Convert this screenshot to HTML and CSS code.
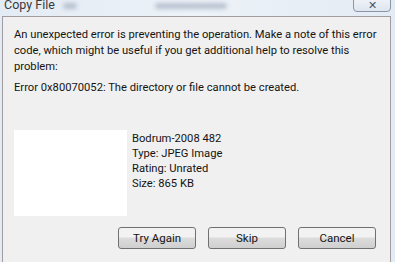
FILE: index.html
```html
<!DOCTYPE html>
<html lang="en">
<head>
  <meta charset="UTF-8" />
  <title>Copy File</title>
  <link rel="stylesheet" href="styles.css">
</head>
<body>

  <div class="window">
    <div class="titlebar">
      <span class="title">Copy File</span>
      <span class="smudge smudge-a"></span>
      <span class="smudge smudge-b"></span>
      <button class="close-btn">&#x2715;</button>
    </div>

    <div class="client">
      <p class="message">An unexpected error is preventing the operation. Make a note of this error code, which might be useful if you get additional help to resolve this problem:</p>
      <p class="error-code">Error 0x80070052: The directory or file cannot be created.</p>

      <div class="file-info">
        <div class="thumb"></div>
        <div class="details">
          <div>Bodrum-2008 482</div>
          <div>Type: JPEG Image</div>
          <div>Rating: Unrated</div>
          <div>Size: 865 KB</div>
        </div>
      </div>

      <div class="actions">
        <button class="btn">Try Again</button>
        <button class="btn">Skip</button>
        <button class="btn">Cancel</button>
      </div>
    </div>
  </div>

</body>
</html>
```

FILE: styles.css
```css
body {
  margin: 0;
  font-family: Roboto, 'Open Sans', sans-serif;
  font-size: 11.2px;
  color: #141414;
  background: #e6edf5;
}

.window {
  width: 395px;
  height: 262px;
  display: flex;
  flex-direction: column;
  background: linear-gradient(to right, #e3ebf4, #edf2f8 50%, #e3ebf4);
  overflow: hidden;
}

.titlebar {
  height: 16px;
  display: flex;
  align-items: flex-start;
}

.title {
  margin-top: -2px;
  padding-left: 4px;
  font-size: 12.5px;
  line-height: 14px;
  color: #3a3a3a;
}

.smudge {
  height: 6px;
  margin-top: 3px;
  background: #8f9cb0;
  filter: blur(2px);
  opacity: 0.55;
  border-radius: 3px;
}

.smudge-a {
  width: 14px;
  margin-left: 8px;
}

.smudge-b {
  width: 72px;
  margin-left: 78px;
}

.close-btn {
  margin-left: auto;
  margin-right: 4px;
  margin-top: -6px;
  width: 38px;
  height: 18px;
  border: 1px solid #8a96a8;
  border-radius: 0 0 4px 4px;
  background: linear-gradient(#f4f7fb, #dfe6ef);
  color: #4a5566;
  font-size: 11px;
  line-height: 10px;
  padding: 4px 0 0;
}

.client {
  flex: 1;
  margin: 0 4px 0 2px;
  border: 1px solid #a29ca0;
  border-bottom: none;
  background: #f0f0f0;
  padding: 10px 10px 0 11px;
}

.message {
  margin: 0;
  line-height: 16px;
}

.error-code {
  margin: 5px 0 0;
  line-height: 16px;
}

.file-info {
  display: flex;
  margin-top: 34px;
}

.thumb {
  width: 113px;
  height: 86px;
  background: #ffffff;
}

.details {
  margin-left: 5px;
  padding-top: 1px;
  line-height: 15px;
}

.actions {
  display: flex;
  justify-content: flex-end;
  gap: 12px;
  margin-top: 11px;
  padding-right: 4px;
}

.btn {
  width: 78px;
  height: 22px;
  border: 1px solid #707070;
  border-radius: 3px;
  background: linear-gradient(#f2f2f2 45%, #dcdcdc 50%, #cfcfcf);
  font-family: Roboto, 'Open Sans', sans-serif;
  font-size: 11.5px;
  color: #141414;
  padding: 0;
}
```
